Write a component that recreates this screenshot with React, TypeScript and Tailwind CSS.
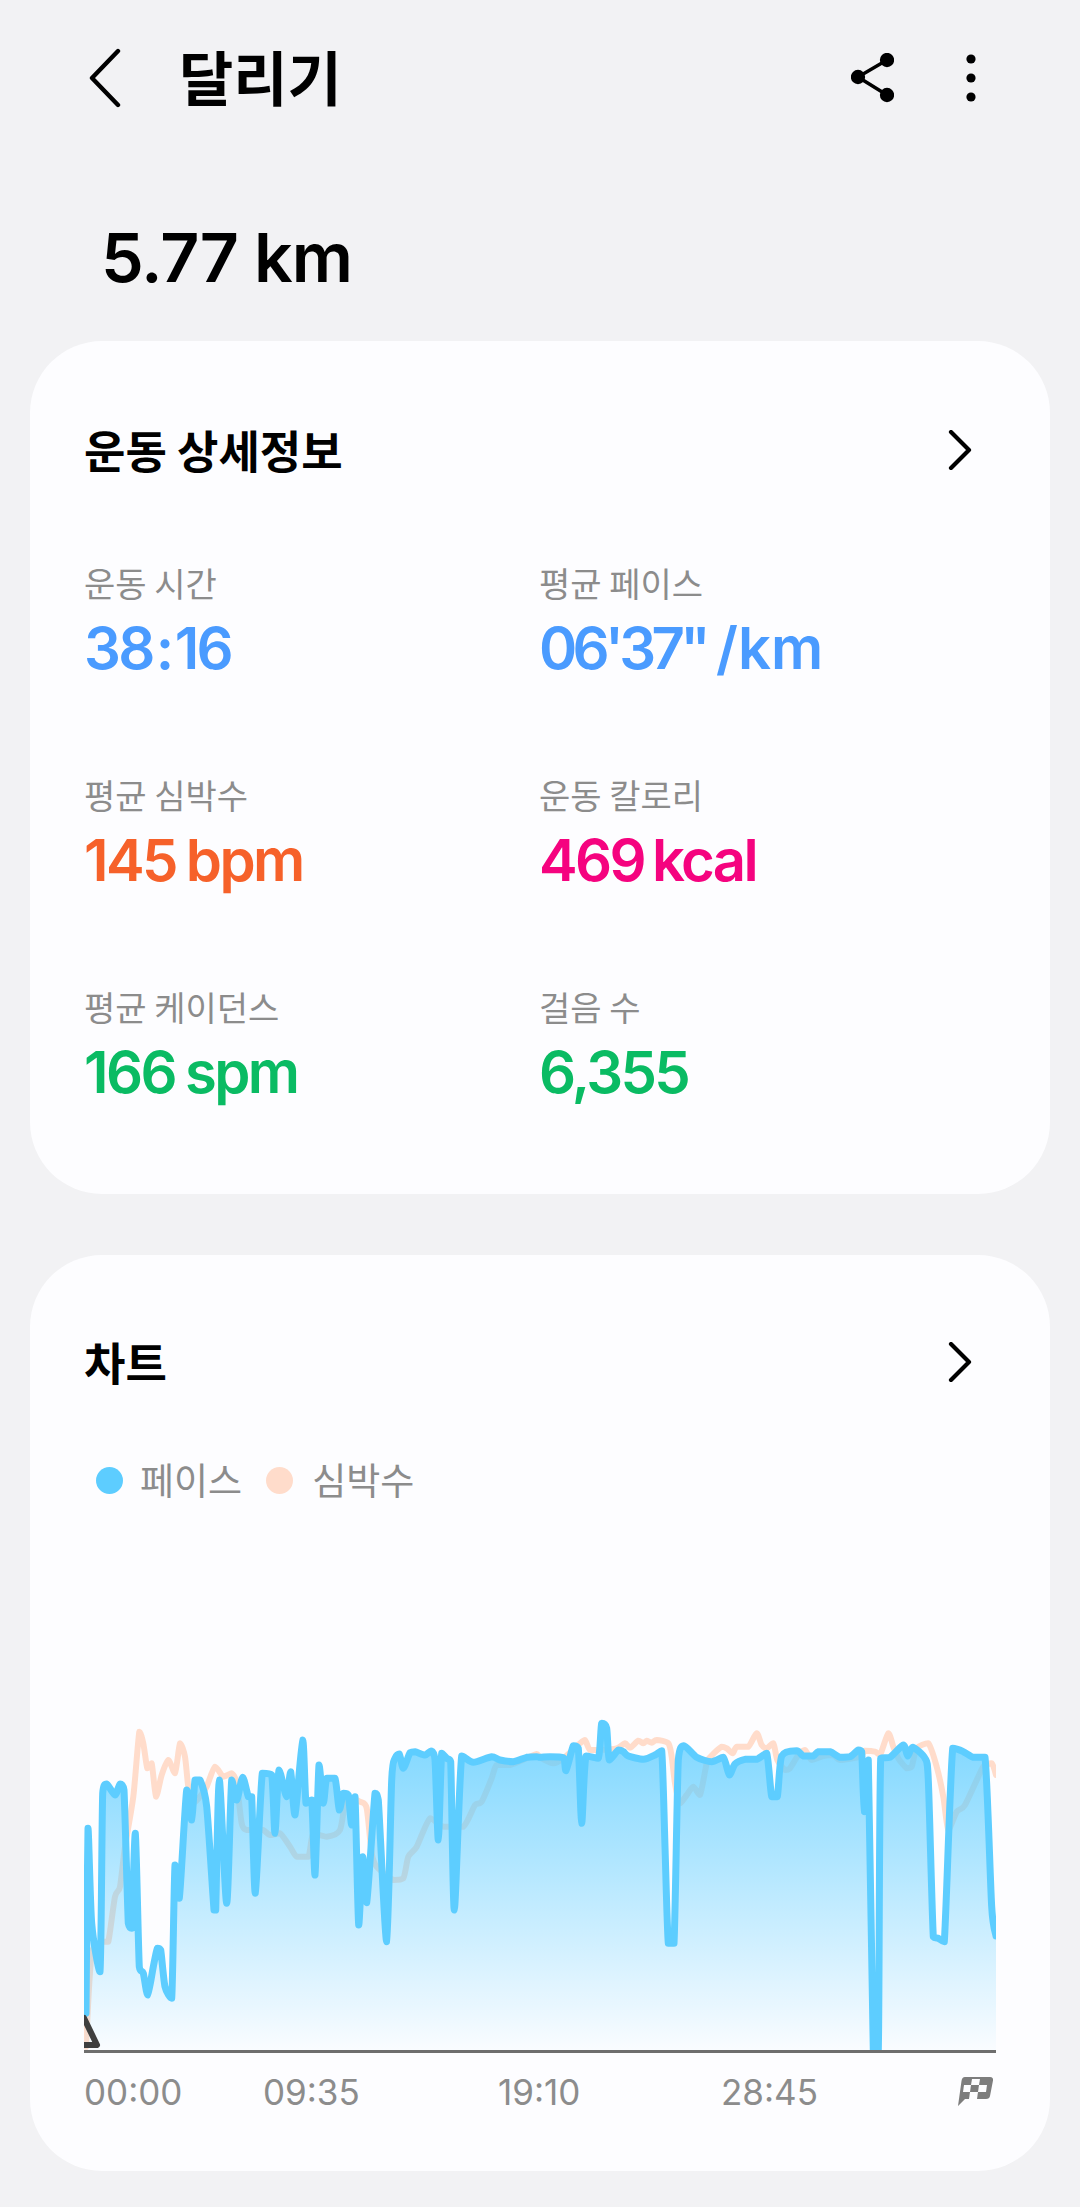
const blueA: number[][] = [[78,1000],[84,445],[95,730],[120,875],[128,340],[140,312],[165,345],[180,312],[192,330],[205,730],[215,745],[226,460],[238,860],[250,880],[263,945],[280,860],[292,805],[302,810],[315,920],[335,955],[345,555],[358,655],[380,330],[395,420],[405,300],[420,300],[440,380],[462,690],[467,690],[478,300],[500,670],[515,300],[530,360],[548,292],[565,350],[575,350],[586,640],[607,280],[635,285],[645,460],[657,270],[680,350],[692,275],[705,405],[728,180],[738,370],[755,360],[765,585],[777,255],[790,370],[800,295],[825,295],[838,390],[850,340],[865,345],[875,435],[885,350],[896,735],[908,530],[920,668],[945,340],[955,360],[980,785],[995,300],[1005,235],[1018,222],[1030,265],[1050,218],[1065,215],[1095,225],[1113,213],[1125,240],[1135,480],[1145,220],[1160,235],[1172,245],[1183,690],[1205,228],[1240,247],[1295,230],[1320,240],[1360,245],[1400,232],[1430,230]];
const blueB: number[][] = [[0,232],[30,230],[70,233],[78,272],[100,197],[115,205],[125,430],[138,228],[175,235],[185,130],[200,145],[208,240],[235,210],[250,215],[265,228],[310,238],[345,225],[365,212],[375,500],[385,790],[402,790],[415,240],[432,197],[470,232],[515,245],[550,232],[568,285],[585,252],[615,238],[650,238],[680,220],[695,350],[712,350],[725,228],[770,212],[790,228],[820,228],[835,215],[870,215],[900,232],[930,230],[955,210],[965,215],[973,395],[985,240],[1000,1112],[1015,1112],[1022,235],[1050,232],[1090,195],[1103,228],[1118,202],[1155,235],[1165,300],[1180,770],[1195,775],[1213,785],[1238,205],[1270,215],[1300,232],[1335,232],[1355,680],[1368,768]];
const peachA: number[][] = [[78,1100],[95,820],[130,785],[145,785],[165,650],[180,620],[195,500],[220,350],[238,155],[250,190],[262,265],[275,250],[288,350],[305,285],[325,240],[345,280],[360,190],[375,230],[385,320],[400,370],[420,350],[440,320],[465,260],[490,290],[515,280],[530,310],[545,430],[560,450],[590,450],[610,450],[630,465],[660,460],[690,500],[710,530],[745,530],[760,460],[800,470],[840,450],[860,350],[900,365],[920,385],[935,520],[950,560],[1000,600],[1030,595],[1045,530],[1070,500],[1110,415],[1150,440],[1210,440],[1245,375],[1265,365],[1295,295],[1310,255],[1350,255],[1400,235],[1430,222]];
const peachB: number[][] = [[0,232],[40,250],[70,235],[120,190],[135,180],[150,210],[180,210],[230,205],[255,190],[270,203],[295,182],[310,190],[320,182],[335,188],[350,180],[385,190],[395,230],[405,310],[420,370],[440,345],[460,320],[480,345],[500,250],[510,232],[545,200],[560,205],[578,220],[590,200],[625,200],[650,160],[665,195],[680,205],[700,190],[712,240],[735,270],[750,265],[775,225],[795,210],[815,240],[850,228],[880,225],[900,240],[960,230],[975,212],[1005,215],[1020,225],[1045,160],[1060,200],[1075,235],[1100,265],[1115,260],[1130,205],[1165,190],[1190,260],[1210,350],[1225,450],[1250,395],[1275,375],[1330,260],[1355,250],[1368,285]];

const toPage = (a: number[][], b: number[][]) => [
  ...a.map(([x, y]) => [60 + x / 3, 1680 + y / 3]),
  ...b.map(([x, y]) => [540 + x / 3, 1680 + y / 3]),
];

function smooth(p: number[][]) {
  let d = `M${p[0][0].toFixed(1)} ${p[0][1].toFixed(1)}`;
  const clamp = (v: number, m: number, n: number) => Math.min(Math.max(m, n), Math.max(Math.min(m, n), v));
  for (let i = 0; i < p.length - 1; i++) {
    const a = p[Math.max(0, i - 1)], b = p[i], c = p[i + 1], e = p[Math.min(p.length - 1, i + 2)];
    const k = 1 / 8;
    const x1 = b[0] + (c[0] - a[0]) * k;
    const y1 = clamp(b[1] + (c[1] - a[1]) * k, b[1], c[1]);
    const x2 = c[0] - (e[0] - b[0]) * k;
    const y2 = clamp(c[1] - (e[1] - b[1]) * k, b[1], c[1]);
    d += `C${x1.toFixed(1)} ${y1.toFixed(1)} ${x2.toFixed(1)} ${y2.toFixed(1)} ${c[0].toFixed(1)} ${c[1].toFixed(1)}`;
  }
  return d;
}

const blueLine = smooth(toPage(blueA, blueB));
const peachLine = smooth(toPage(peachA, peachB));
const blueArea = `${blueLine}L996 2051L84 2051Z`;

function Chevron() {
  return (
    <svg width="24" height="40" viewBox="0 0 24 40" fill="none" stroke="#000" strokeWidth="4.2" strokeLinecap="round" strokeLinejoin="round">
      <path d="M3 2 L21 20 L3 38" />
    </svg>
  );
}

function CardHeader({ title }: { title: string }) {
  return (
    <div className="flex h-[74px] items-center justify-between pr-[23px]">
      <span className="-mt-[2px] text-[45px] font-bold leading-none text-black">{title}</span>
      <Chevron />
    </div>
  );
}

function Stat({ label, children, color }: { label: string; children: React.ReactNode; color: string }) {
  return (
    <div className="h-[212px]">
      <div className="h-[50px] text-[34px] leading-[50px] text-[#8c8c8c]">{label}</div>
      <div className={`mt-[5px] h-[70px] whitespace-nowrap font-['Inter',sans-serif] text-[58px] font-semibold leading-[70px] tracking-[-0.045em] ${color}`}>
        {children}
      </div>
    </div>
  );
}

export default function App() {
  return (
    <div className="h-[2207px] w-[1080px] overflow-hidden bg-[#f2f2f4] font-['Noto_Sans_CJK_KR','Noto_Sans',sans-serif]">
      <header className="flex h-[156px] items-center pl-[88px] pr-[104px]">
        <svg width="34" height="60" viewBox="0 0 34 60" fill="none" stroke="#000" strokeWidth="4.4" strokeLinecap="round" strokeLinejoin="round">
          <path d="M30 3 L4 30 L30 57" />
        </svg>
        <h1 className="mb-[6px] ml-[57px] text-[59px] font-bold leading-none text-black">달리기</h1>
        <div className="ml-auto flex items-center gap-[72px]">
          <svg width="43" height="50" viewBox="0 0 43 50" fill="#000" stroke="#000" strokeWidth="3.5">
            <path d="M36 7 L7 24 L36 42" fill="none" />
            <circle cx="36" cy="7" r="5.4" />
            <circle cx="7" cy="24" r="5.4" />
            <circle cx="36" cy="42" r="5.4" />
          </svg>
          <svg width="10" height="48" viewBox="0 0 10 48" fill="#000">
            <circle cx="5" cy="5" r="4.6" />
            <circle cx="5" cy="24" r="4.6" />
            <circle cx="5" cy="43" r="4.6" />
          </svg>
        </div>
      </header>

      <div className="flex h-[185px] items-start pl-[101px] pt-[59px]">
        <span className="font-['Inter',sans-serif] text-[68px] font-semibold leading-[84px] tracking-[-0.015em] text-black">5.77 km</span>
      </div>

      <section className="mx-[30px] h-[853px] rounded-[72px] bg-[#fdfdff] pl-[54px] pr-[55px] pt-[72px]">
        <CardHeader title="운동 상세정보" />
        <div className="mt-[71px] grid grid-cols-[455px_1fr]">
          <Stat label="운동 시간" color="text-[#4a9bff]">38<span className="mx-[3px]">:</span>16</Stat>
          <Stat label="평균 페이스" color="text-[#4a9bff]"><span className="tracking-[-0.08em]">06'37"</span><span className="ml-[10px] tracking-normal">/km</span></Stat>
          <Stat label="평균 심박수" color="text-[#f6612a]">145<span className="ml-[10px]">bpm</span></Stat>
          <Stat label="운동 칼로리" color="text-[#f5037f]">469<span className="ml-[8px]">kcal</span></Stat>
          <Stat label="평균 케이던스" color="text-[#0abb63]">166<span className="ml-[10px]">spm</span></Stat>
          <Stat label="걸음 수" color="text-[#0abb63]">6,355</Stat>
        </div>
      </section>

      <section className="mx-[30px] mt-[61px] h-[916px] rounded-[72px] bg-[#fdfdff] pt-[70px]">
        <div className="pl-[54px] pr-[55px]">
          <CardHeader title="차트" />
        </div>
        <div className="ml-[66px] mt-[56px] flex h-[50px] items-center text-[37px] text-[#8c8c8c]">
          <span className="h-[27px] w-[27px] rounded-full bg-[#5dcdff]" />
          <span className="ml-[17px]">페이스</span>
          <span className="ml-[24px] h-[27px] w-[27px] rounded-full bg-[#ffdccb]" />
          <span className="ml-[19px]">심박수</span>
        </div>

        <svg className="ml-[54px] mt-[175px] block" width="912" height="374" viewBox="84 1680 912 374">
          <defs>
            <linearGradient id="fillBlue" x1="0" y1="1720" x2="0" y2="2051" gradientUnits="userSpaceOnUse">
              <stop offset="0" stopColor="#5dcdff" stopOpacity="0.82" />
              <stop offset="1" stopColor="#5dcdff" stopOpacity="0.02" />
            </linearGradient>
            <clipPath id="plot">
              <rect x="84" y="1680" width="912" height="370" />
            </clipPath>
          </defs>
          <g clipPath="url(#plot)" fill="none" strokeLinejoin="round" strokeLinecap="round">
            <path d={peachLine} stroke="#ffdccb" strokeWidth="6" />
            <path d={blueArea} fill="url(#fillBlue)" stroke="none" />
            <path d={blueLine} stroke="#5dcdff" strokeWidth="7" />
            <path d="M84 2018 L97 2045 L84 2045" stroke="#3f3f3f" strokeWidth="6" />
          </g>
          <rect x="84" y="2050" width="912" height="3" fill="#6e6e6e" />
        </svg>

        <div className="ml-[54px] mt-[13px] flex h-[50px] items-center font-['Inter',sans-serif] text-[35px] text-[#8c8c8c]">
          <span className="w-[179px]">00:00</span>
          <span className="w-[235px]">09:35</span>
          <span className="w-[223px]">19:10</span>
          <span className="w-[236px]">28:45</span>
          <svg width="37" height="32" viewBox="0 0 37 32" fill="#7d7d7d">
            <path d="M8 1 H33 Q36.5 1 36 4.5 L33 20 Q32.5 23 29 23 H8 L1 30 L4.5 5 Q5 1 8 1 Z" />
            <g fill="#fdfdff">
              <path d="M15 3 H23 L22 9 H14 Z" />
              <path d="M7 9 H14 L13 16 H6 Z" />
              <path d="M22 9 H30 L29 16 H21 Z" />
              <path d="M13 16 H21 L20 23 H12 Z" />
            </g>
          </svg>
        </div>
      </section>
    </div>
  );
}
